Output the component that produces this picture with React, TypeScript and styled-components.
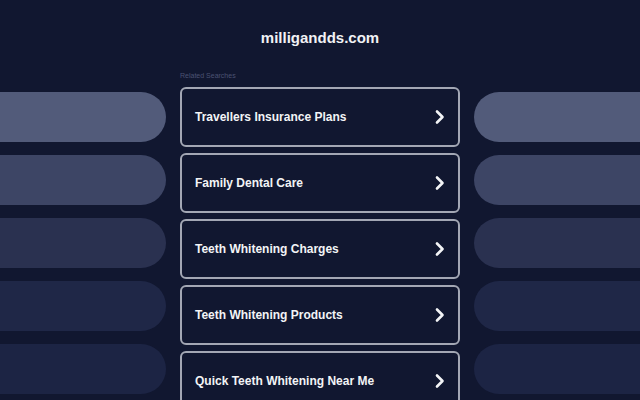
import React from 'react';
import styled, { createGlobalStyle } from 'styled-components';

const GlobalStyle = createGlobalStyle`
  html, body {
    margin: 0;
    padding: 0;
    background: #111730;
    overflow: hidden;
  }
  body {
    font-family: "Liberation Sans", Arial, sans-serif;
  }
`;

const Page = styled.div`
  width: 640px;
  height: 400px;
  background: #111730;
  overflow: hidden;
`;

const Header = styled.h1`
  margin: 0;
  height: 76px;
  padding-top: 29px;
  box-sizing: border-box;
  text-align: center;
  font-size: 15px;
  line-height: 18px;
  font-weight: 700;
  color: #f1f2f5;
`;

const Body = styled.div`
  display: grid;
  grid-template-columns: 166px 280px 166px;
  column-gap: 14px;
  margin-top: -6px;
`;

const Side = styled.div`
  display: flex;
  flex-direction: column;
  gap: 13px;
  padding-top: 22px;
`;

const Pill = styled.div<{ $shade: string; $side: 'left' | 'right' }>`
  height: 50px;
  background: ${p => p.$shade};
  border-radius: ${p => (p.$side === 'left' ? '0 25px 25px 0' : '25px 0 0 25px')};
`;

const Center = styled.div`
  display: flex;
  flex-direction: column;
`;

const Label = styled.div`
  font-size: 7px;
  line-height: 10px;
  color: #4b5272;
  height: 17px;
  padding-top: 1px;
  box-sizing: border-box;
`;

const Cards = styled.div`
  display: flex;
  flex-direction: column;
  gap: 6px;
`;

const Card = styled.a`
  display: flex;
  align-items: center;
  justify-content: space-between;
  height: 60px;
  box-sizing: border-box;
  padding: 0 11px 0 13px;
  border: 2px solid #a3a7b4;
  border-radius: 6px;
  color: #f3f4f6;
  font-size: 12px;
  font-weight: 700;
  text-decoration: none;
`;

const Chevron = () => (
  <svg width="14" height="16" viewBox="0 0 14 16" fill="none">
    <path d="M4 2.5 L9.5 8 L4 13.5" stroke="#f3f4f6" strokeWidth="2.6" strokeLinecap="round" strokeLinejoin="round" />
  </svg>
);

const searches = [
  'Travellers Insurance Plans',
  'Family Dental Care',
  'Teeth Whitening Charges',
  'Teeth Whitening Products',
  'Quick Teeth Whitening Near Me',
];

const shades = ['#525b7a', '#3d4565', '#2a3150', '#1f2747', '#1c2444'];

export default function App() {
  return (
    <Page>
      <GlobalStyle />
      <Header>milligandds.com</Header>
      <Body>
        <Side>
          {shades.map(s => <Pill key={s} $shade={s} $side="left" />)}
        </Side>
        <Center>
          <Label>Related Searches</Label>
          <Cards>
            {searches.map(s => (
              <Card key={s} href="#">
                <span>{s}</span>
                <Chevron />
              </Card>
            ))}
          </Cards>
        </Center>
        <Side>
          {shades.map(s => <Pill key={s} $shade={s} $side="right" />)}
        </Side>
      </Body>
    </Page>
  );
}
